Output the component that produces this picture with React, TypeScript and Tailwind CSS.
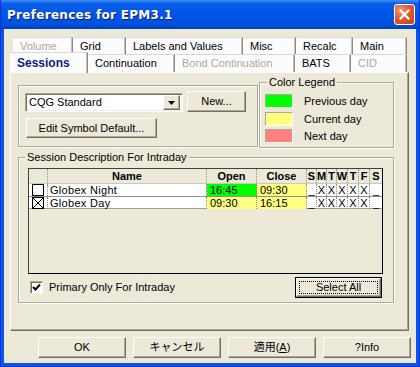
import React from 'react';

const tabsTop = [
  { label: 'Volume', w: 'w-[60px]', disabled: true },
  { label: 'Grid', w: 'w-[53px]' },
  { label: 'Labels and Values', w: 'w-[117px]' },
  { label: 'Misc', w: 'w-[53px]' },
  { label: 'Recalc', w: 'w-[57px]' },
  { label: 'Main', w: 'w-[54px]' },
];

const tabsBottom = [
  { label: 'Continuation', w: 'w-[87px]' },
  { label: 'Bond Continuation', w: 'w-[120px]', disabled: true },
  { label: 'BATS', w: 'w-[56px]' },
  { label: 'CID', w: 'w-[56px]', disabled: true },
];

const sessions = [
  { name: 'Globex Night', open: '16:45', openBg: 'bg-[#00ff00]', close: '09:30', checked: false },
  { name: 'Globex Day', open: '09:30', openBg: 'bg-[#ffff80]', close: '16:15', checked: true },
];

const days = ['S', 'M', 'T', 'W', 'T', 'F', 'S'];
const dayMarks = ['_', 'X', 'X', 'X', 'X', 'X', '_'];

const cols = 'grid grid-cols-[19px_159px_50px_50px_10px_10px_10px_11px_11px_11px_12px]';
const raised =
  'bg-[#ece9d8] border border-t-white border-l-white border-r-[#716f64] border-b-[#716f64] shadow-[inset_-1px_-1px_0_#aca899]';
const etched = 'border border-[#aca899] shadow-[inset_1px_1px_0_#fff,1px_1px_0_#fff]';

const Tab = ({ label, w, disabled }: { label: string; w: string; disabled?: boolean }) => (
  <div
    className={`${w} h-full bg-[#fcfcfe] border-t border-l border-r border-t-[#dcdad0] border-l-white border-r-[#8d8a80] shadow-[inset_-1px_0_0_#c4c1b6] pl-[6px] flex items-center text-[11px] ${
      disabled ? 'text-[#aca899]' : 'text-black'
    }`}
  >
    {label}
  </div>
);

const Button = ({ children, className }: { children: React.ReactNode; className: string }) => (
  <div className={`${raised} ${className} flex items-center justify-center text-[11px] text-black`}>{children}</div>
);

const SessionTable = () => (
  <div className="ml-[9px] mt-[4px] w-[355px] h-[106px] border border-black border-t-[#404040] border-l-[#404040] flex flex-col bg-[#ece9d8]">
    <div className={`${cols} h-[14px]`}>
      {['', 'Name', 'Open', 'Close', ...days].map((h, i) => (
        <div
          key={i}
          className={`flex items-center justify-center text-[11px] font-bold leading-none ${
            i < 10 ? 'border-r border-dotted border-[#8f8f8f]' : ''
          }`}
        >
          {h}
        </div>
      ))}
    </div>
    {sessions.map((s, r) => (
      <div
        key={s.name}
        className={`${cols} h-[13px] bg-white border-t ${
          r === 0 ? 'border-[#c8c8c8]' : 'border-dotted border-[#8f8f8f]'
        } ${r === sessions.length - 1 ? 'border-b border-b-[#a0a0a0] border-solid' : ''}`}
      >
        <div className="border-r border-dotted border-[#8f8f8f] flex items-center pl-[3px]">
          <svg width="12" height="12" viewBox="0 0 12 12">
            <rect x="0.5" y="0.5" width="11" height="11" fill="white" stroke="black" />
            {s.checked && <path d="M1 1 L11 11 M11 1 L1 11" stroke="black" strokeWidth="1" />}
          </svg>
        </div>
        <div className="border-r border-dotted border-[#8f8f8f] pl-[2px] text-[11px] leading-[12px] tracking-[0.3px]">
          {s.name}
        </div>
        <div className={`${s.openBg} border-r border-dotted border-[#8f8f8f] pl-[3px] text-[11px] leading-[12px]`}>
          {s.open}
        </div>
        <div className="bg-[#ffff80] border-r border-dotted border-[#8f8f8f] pl-[3px] text-[11px] leading-[12px]">
          {s.close}
        </div>
        {dayMarks.map((m, i) => (
          <div
            key={i}
            className={`flex justify-center text-[11px] leading-[12px] ${
              i < 6 ? 'border-r border-dotted border-[#8f8f8f]' : ''
            }`}
          >
            {m}
          </div>
        ))}
      </div>
    ))}
    <div className="flex-1" />
  </div>
);

export default function App() {
  return (
    <div className="w-[420px] h-[367px] flex flex-col bg-[#0a56e6] border-x border-b border-[#0831d9] overflow-hidden font-['Liberation_Sans','Noto_Sans_CJK_JP',sans-serif] text-black">
      {/* title bar */}
      <div className="h-[29px] shrink-0 flex items-center pl-[6px] pr-[4px] bg-[linear-gradient(to_bottom,#4191f5_0%,#0a5ee8_12%,#0055e5_50%,#0052dd_85%,#0043be_100%)]">
        <span className="font-['DejaVu_Sans',sans-serif] font-bold text-[12px] tracking-[0.3px] text-white [text-shadow:1px_1px_0_#0a1f7a]">
          Preferences for EPM3.1
        </span>
        <div className="ml-auto w-[21px] h-[21px] rounded-[3px] border border-white bg-[radial-gradient(circle_at_30%_30%,#f29a80_0%,#e05a36_45%,#c8400f_100%)] flex items-center justify-center">
          <svg width="13" height="13" viewBox="0 0 13 13">
            <path d="M2.5 2.5 L10.5 10.5 M10.5 2.5 L2.5 10.5" stroke="white" strokeWidth="2.2" strokeLinecap="square" />
          </svg>
        </div>
      </div>

      {/* client */}
      <div className="flex-1 mx-[3px] mb-[3px] bg-[#ece9d8] flex flex-col">
        <div className="mt-[8px] ml-[6px] w-[399px] flex flex-col">
          <div className="h-[17px] flex pl-[3px]">
            {tabsTop.map((t) => (
              <Tab key={t.label} {...t} />
            ))}
          </div>
          <div className="h-[18px] flex items-start">
            <div className="relative z-10 w-[78px] h-[21px] -mt-[2px] bg-[#fcfcfe] border-t border-l border-r border-t-[#dcdad0] border-l-white border-r-[#8d8a80] shadow-[inset_-1px_0_0_#c4c1b6] pl-[6px] flex items-center text-[12px] font-bold text-[#0c1a8a]">
              Sessions
            </div>
            {tabsBottom.map((t) => (
              <Tab key={t.label} {...t} />
            ))}
          </div>

          {/* tab panel */}
          <div className="w-[399px] h-[259px] border border-t-white border-l-white border-r-[#716f64] border-b-[#716f64] shadow-[inset_-1px_-1px_0_#aca899] flex flex-col">
            <div className="flex items-start ml-[7px]">
              <div className={`${etched} mt-[12px] w-[240px] h-[62px]`}>
                <div className="flex items-end gap-[4px] pt-[5px] pl-[6px]">
                  <div className="w-[158px] h-[19px] bg-white border border-t-[#aca899] border-l-[#aca899] border-r-white border-b-white shadow-[inset_1px_1px_0_#716f64,inset_-1px_-1px_0_#f1efe2] flex items-center pl-[3px] pr-[2px]">
                    <span className="text-[11px]">CQG Standard</span>
                    <div className={`${raised} ml-auto w-[17px] h-[15px] flex items-center justify-center`}>
                      <svg width="7" height="4" viewBox="0 0 7 4">
                        <path d="M0 0 H7 L3.5 4 Z" fill="black" />
                      </svg>
                    </div>
                  </div>
                  <Button className="w-[59px] h-[21px]">New...</Button>
                </div>
                <Button className="mt-[6px] ml-[7px] w-[131px] h-[20px]">Edit Symbol Default...</Button>
              </div>

              <div className={`${etched} ml-[1px] mt-[9px] w-[135px] h-[66px]`}>
                <div className="-mt-[7px] ml-[7px] px-[2px] w-fit bg-[#ece9d8] text-[11px] leading-[13px]">
                  Color Legend
                </div>
                {[
                  { c: 'bg-[#00ff00]', t: 'Previous day', m: 'mt-[5px]' },
                  { c: 'bg-[#ffff80]', t: 'Current day', m: 'mt-[4px]' },
                  { c: 'bg-[#ff8080]', t: 'Next day', m: 'mt-[3px]' },
                ].map((l) => (
                  <div key={l.t} className={`${l.m} ml-[5px] h-[14px] flex items-center gap-[11px]`}>
                    <div
                      className={`${l.c} w-[28px] h-[14px] border border-t-[#aca899] border-l-[#aca899] border-r-white border-b-white`}
                    />
                    <span className="text-[11px]">{l.t}</span>
                  </div>
                ))}
              </div>
            </div>

            <div className={`${etched} mt-[9px] ml-[7px] w-[376px] h-[146px]`}>
              <div className="-mt-[7px] ml-[6px] px-[2px] w-fit bg-[#ece9d8] text-[11px] leading-[13px]">
                Session Description For Intraday
              </div>
              <SessionTable />
              <div className="mt-[3px] ml-[11px] w-[352px] flex items-center justify-between">
                <div className="flex items-center gap-[6px]">
                  <div className="w-[13px] h-[13px] bg-white border border-t-[#aca899] border-l-[#aca899] border-r-white border-b-white shadow-[inset_1px_1px_0_#716f64] flex items-center justify-center">
                    <svg width="9" height="9" viewBox="0 0 9 9">
                      <path d="M1 4 L3.5 6.5 L8 1.5" stroke="black" strokeWidth="2" fill="none" />
                    </svg>
                  </div>
                  <span className="text-[11px]">Primary Only For Intraday</span>
                </div>
                <div className="border border-black">
                  <div className={`${raised} w-[85px] h-[19px] p-[2px]`}>
                    <div className="w-full h-full border border-dotted border-black flex items-center justify-center text-[11px]">
                      Select All
                    </div>
                  </div>
                </div>
              </div>
            </div>
          </div>
        </div>

        {/* dialog buttons */}
        <div className="mt-[6px] flex justify-end gap-[7px] pr-[5px]">
          <Button className="w-[88px] h-[21px]">OK</Button>
          <Button className="w-[88px] h-[21px]">キャンセル</Button>
          <Button className="w-[88px] h-[21px]">
            <span>
              適用(<span className="underline">A</span>)
            </span>
          </Button>
          <Button className="w-[88px] h-[21px]">?Info</Button>
        </div>
      </div>
    </div>
  );
}
